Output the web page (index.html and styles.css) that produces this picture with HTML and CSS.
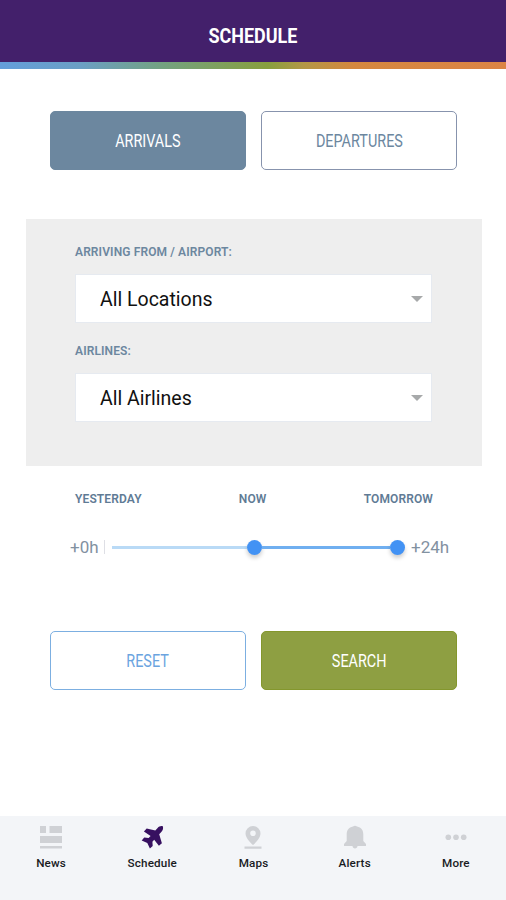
FILE: index.html
```html
<!DOCTYPE html>
<html lang="en">
<head>
<meta charset="utf-8">
<title>Schedule</title>
<link rel="stylesheet" href="styles.css">
</head>
<body>
<div class="app">
  <header class="header"><h1 class="title">SCHEDULE</h1></header>
  <div class="stripe"></div>
  <main class="main">
    <div class="buttons">
      <button class="btn btn-slate"><span>ARRIVALS</span></button>
      <button class="btn btn-outline"><span>DEPARTURES</span></button>
    </div>
    <section class="filters">
      <div class="label">ARRIVING FROM / AIRPORT:</div>
      <div class="select"><span>All Locations</span><i class="caret"></i></div>
      <div class="label">AIRLINES:</div>
      <div class="select"><span>All Airlines</span><i class="caret"></i></div>
    </section>
    <div class="days"><span>YESTERDAY</span><span>NOW</span><span>TOMORROW</span></div>
    <div class="range">
      <span class="start">+0h</span><i class="tick"></i>
      <div class="track"><i class="line light"></i><i class="knob"></i><i class="line"></i><i class="knob"></i></div>
      <span class="end">+24h</span>
    </div>
    <div class="buttons actions">
      <button class="btn btn-blue"><span>RESET</span></button>
      <button class="btn btn-green"><span>SEARCH</span></button>
    </div>
  </main>
  <nav class="tabs">
    <a class="tab"><svg class="icon" viewBox="0 0 24 24"><path d="M1 1h6v7H1zM10.500 1H23v7H10.500zM1 11h22v7H1zM1 21h22v2.500H1z"/></svg><span>News</span></a>
    <a class="tab active"><svg class="icon" viewBox="0 0 24 24"><path d="M22.800 1.200c.7 2.100.1 4-1.300 5.500l-2.300 2.600 2.700 8.900-3 2.600-4.700-6-1.800 1.900.3 4.300-2.800 2.500-2.600-5.500-5.600-2.500 2.500-2.900 4.400.3 2-1.900-6.700-4.500L6.700 3.400l8.600 2.100 2.300-2.600c1.400-1.500 3.200-2.200 5.200-1.700z"/></svg><span>Schedule</span></a>
    <a class="tab"><svg class="icon" viewBox="0 0 24 24"><path fill-rule="evenodd" d="M12 1a7.500 7.500 0 0 0-7.500 7.500C4.500 14 12 20 12 20s7.500-6 7.500-11.500A7.500 7.500 0 0 0 12 1zm0 4.500a2.800 2.800 0 1 1 0 5.600 2.800 2.800 0 0 1 0-5.600zM3.500 21.500h17v2.300h-17z"/></svg><span>Maps</span></a>
    <a class="tab"><svg class="icon" viewBox="0 0 24 24"><path d="M10 1.500q2-1.500 4 0c4.300.8 6.300 3.700 6.300 8v6.500l2.700 3v2H1v-2l2.700-3V9.500c0-4.300 2-7.200 6.300-8zM9.500 21h5c0 3.300-5 3.300-5 0z"/></svg><span>Alerts</span></a>
    <a class="tab"><svg class="icon" viewBox="0 0 24 24"><circle cx="4.300" cy="12.300" r="2.800"/><circle cx="12" cy="12.300" r="2.800"/><circle cx="19.700" cy="12.300" r="2.800"/></svg><span>More</span></a>
  </nav>
</div>
</body>
</html>
```
FILE: styles.css
```css
* { box-sizing: border-box; }
body { margin: 0; background: #fff; font-family: Roboto, sans-serif; }
.app { width: 506px; height: 900px; display: flex; flex-direction: column; overflow: hidden; }
.header { height: 62px; padding-top: 9px; background: #43206b; display: flex; align-items: center; justify-content: center; flex: none; }
.title { margin: 0; color: #fff; font-size: 21px; line-height: 24px; font-weight: 700; transform: scaleX(.855); }
.stripe { height: 7px; flex: none; background: linear-gradient(90deg, #649edb 0%, #6b9fc4 16%, #73a281 32%, #889f3e 53%, #b39746 60%, #d5873f 70%, #dc8445 100%); }
.main { flex: 1; padding: 42px 24px 0 25px; }
.buttons { display: grid; grid-template-columns: 196px 196px; gap: 15px; padding-left: 25px; }
.btn { height: 59px; border: 1px solid; border-radius: 5px; padding: 0; font-family: inherit; font-size: 18px; line-height: 22px; background: #fff; }
.btn span { display: inline-block; transform: scaleX(.8); }
.btn-slate { background: #6c879f; border-color: #6c879f; color: #fff; }
.btn-outline { border-color: #8793ad; color: #6c879f; }
.btn-blue { border-color: #7cafe1; color: #6ba4df; }
.btn-green { background: #8e9f42; border-color: #84972d; color: #fff; }
.filters { margin: 49px 0 0 1px; width: 456px; height: 247px; padding: 24px 50px 0 49px; background: #eee; }
.label { height: 31px; color: #6c879f; font-size: 12px; line-height: 18px; font-weight: 600; letter-spacing: .12px; }
.select { height: 49px; border: 1px solid #e6eaf0; background: #fff; padding: 1px 8px 0 24px; display: flex; align-items: center; justify-content: space-between; font-size: 19.5px; color: #111; }
.select + .label { margin-top: 19px; }
.caret { border: 6px solid transparent; border-top: 6px solid #a7a9aa; border-bottom: 0; }
.days { display: flex; justify-content: space-between; margin: 24px 49px 0 50px; color: #5f7b95; font-size: 12px; line-height: 18px; font-weight: 600; letter-spacing: .12px; }
.range { display: flex; align-items: center; height: 24px; margin: 27px 0 0 45px; color: #8291a1; font-size: 17px; }
.start { width: 34px; }
.tick { width: 1px; height: 14px; background: #dedfe5; margin-right: 7px; }
.track { width: 293px; display: flex; align-items: center; }
.line { height: 3px; flex: 1; background: #70aff0; }
.light { flex: 0 0 135px; background: #b9daf6; }
.knob { width: 15px; height: 15px; border-radius: 50%; background: #4292f4; box-shadow: 0 3px 4px #0003; }
.end { margin-left: 6px; }
.actions { margin-top: 72px; }
.tabs { height: 84px; flex: none; background: #f3f5f8; display: grid; grid-template-columns: repeat(5, 1fr); padding-top: 9px; }
.tab { display: flex; flex-direction: column; align-items: center; color: #191b1f; font-size: 11.7px; line-height: 16px; font-weight: 500; }
.tab span { margin: 6px 0 0 1px; letter-spacing: .15px; }
.icon { width: 24px; height: 24px; margin-left: 1px; fill: #cfd1d5; }
.active .icon { fill: #371060; }
```
